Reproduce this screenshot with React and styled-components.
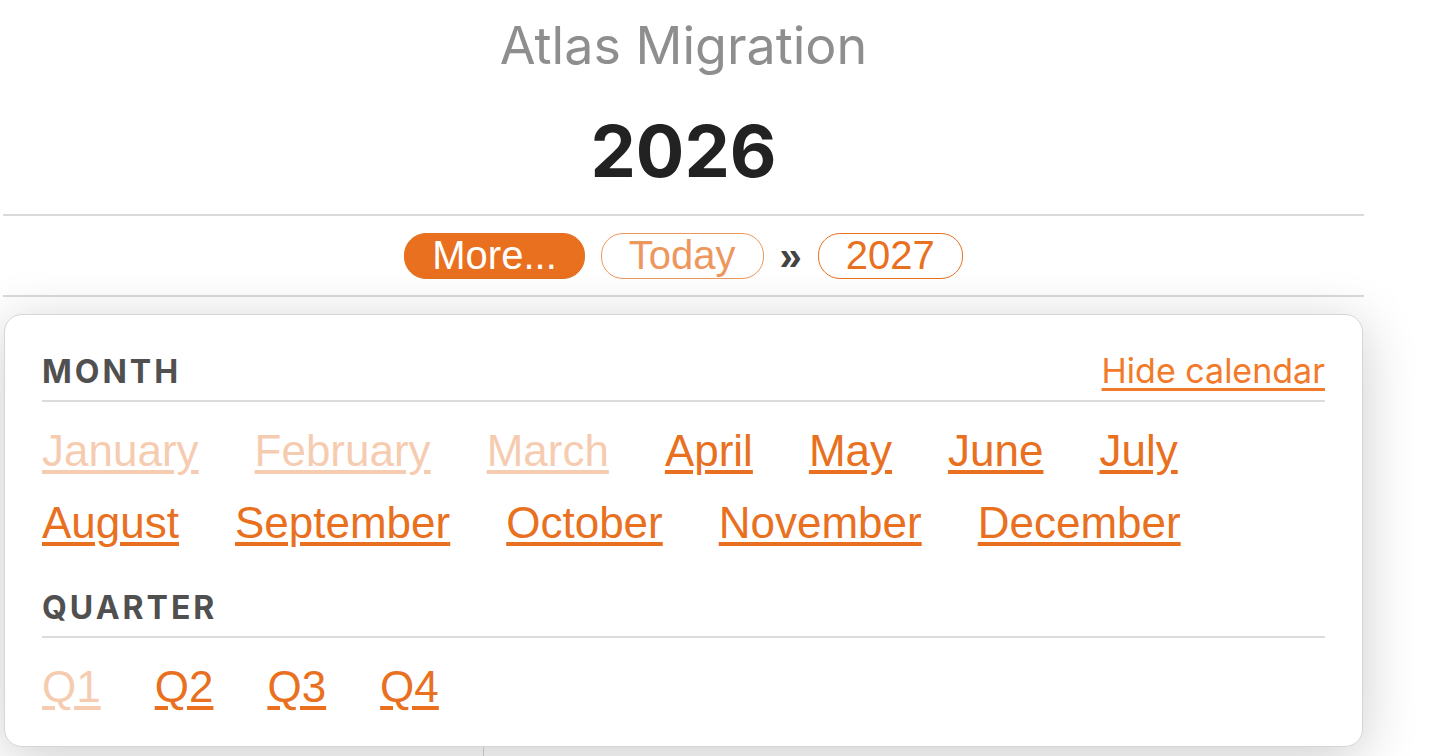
import React from 'react';
import styled, { createGlobalStyle } from 'styled-components';

const ORANGE = '#e8701f';

const GlobalStyle = createGlobalStyle`
  html, body {
    margin: 0;
    padding: 0;
    background: #fff;
  }
  body {
    font-family: "Liberation Sans", Arial, sans-serif;
    overflow: hidden;
  }
`;

const Page = styled.div`
  width: 1361px;
  margin-left: 3px;
`;

const Header = styled.header`
  display: flex;
  flex-direction: column;
  align-items: center;
  padding-top: 16px;
`;

const Title = styled.h1`
  margin: 0;
  font-family: "Inter", "Liberation Sans", sans-serif;
  font-weight: 400;
  font-size: 52px;
  line-height: 60px;
  color: #8e8e8e;
`;

const Year = styled.h2`
  margin: 35px 0 23px;
  font-family: "Inter", "Liberation Sans", sans-serif;
  font-weight: 700;
  font-size: 72px;
  line-height: 80px;
  color: #222;
`;

const NavRow = styled.nav`
  display: flex;
  justify-content: center;
  align-items: center;
  gap: 16px;
  height: 79px;
  border-top: 2px solid #dadada;
  border-bottom: 2px solid #dadada;
`;

const Pill = styled.button`
  height: 46px;
  box-sizing: border-box;
  padding: 0 27px;
  border-radius: 22px;
  border: 1.5px solid ${ORANGE};
  background: ${p => (p.$filled ? ORANGE : '#fff')};
  color: ${p => (p.$filled ? '#fff' : ORANGE)};
  opacity: ${p => (p.$faded ? 0.72 : 1)};
  font-family: "Liberation Sans", Arial, sans-serif;
  font-size: 40px;
  line-height: 43px;
  cursor: pointer;
`;

const Chevrons = styled.span`
  font-size: 40px;
  line-height: 46px;
  color: #444;
  font-weight: 700;
`;

const Main = styled.main`
  position: relative;
  display: grid;
  grid-template-columns: 480px 1fr;
  padding-top: 60px;
  min-height: calc(100vh - 357px);
`;

const Column = styled.section`
  border-left: ${p => (p.$divided ? '1px solid #d6d6d6' : 'none')};
`;

const Popover = styled.div`
  position: absolute;
  top: 17px;
  left: 1px;
  right: 1px;
  box-sizing: border-box;
  padding: 36px 37px 23px;
  background: #fff;
  border: 1px solid #d6d6d6;
  border-radius: 18px;
  box-shadow: 0 10px 56px rgba(0, 0, 0, 0.2);
`;

const SectionHead = styled.div`
  display: flex;
  justify-content: space-between;
  align-items: baseline;
  padding-bottom: 8px;
  border-bottom: 2px solid #dcdcdc;
  margin-top: ${p => p.$offset || 0}px;
`;

const Label = styled.span`
  font-family: "Inter", "Liberation Sans", sans-serif;
  font-weight: 700;
  font-size: 32px;
  line-height: 40px;
  letter-spacing: 3px;
  color: #505050;
`;

const HideLink = styled.a`
  font-family: "Inter", "Liberation Sans", sans-serif;
  font-size: 34px;
  line-height: 40px;
  color: #f27a2a;
  text-decoration: underline;
  text-decoration-thickness: 3px;
  text-underline-offset: 5px;
  cursor: pointer;
`;

const LinkList = styled.div`
  display: flex;
  flex-wrap: wrap;
  column-gap: ${p => p.$gap || 56}px;
  padding-top: 13px;
`;

const PeriodLink = styled.a`
  font-family: "Liberation Sans", Arial, sans-serif;
  font-size: 44px;
  line-height: 72px;
  color: ${ORANGE};
  opacity: ${p => (p.$past ? 0.35 : 1)};
  text-decoration: underline;
  text-decoration-thickness: 4px;
  text-underline-offset: 4px;
  cursor: pointer;
`;

const months = [
  'January', 'February', 'March', 'April', 'May', 'June',
  'July', 'August', 'September', 'October', 'November', 'December',
];
const quarters = ['Q1', 'Q2', 'Q3', 'Q4'];

export default function App() {
  return (
    <Page>
      <GlobalStyle />
      <Header>
        <Title>Atlas Migration</Title>
        <Year>2026</Year>
      </Header>
      <NavRow>
        <Pill $filled>More...</Pill>
        <Pill $faded>Today</Pill>
        <Chevrons>»</Chevrons>
        <Pill>2027</Pill>
      </NavRow>
      <Main>
        <Column />
        <Column $divided />
        <Popover>
          <SectionHead>
            <Label>MONTH</Label>
            <HideLink>Hide calendar</HideLink>
          </SectionHead>
          <LinkList>
            {months.map((m, i) => (
              <PeriodLink key={m} $past={i < 3}>{m}</PeriodLink>
            ))}
          </LinkList>
          <SectionHead $offset={29}>
            <Label>QUARTER</Label>
          </SectionHead>
          <LinkList $gap={54}>
            {quarters.map((q, i) => (
              <PeriodLink key={q} $past={i === 0}>{q}</PeriodLink>
            ))}
          </LinkList>
        </Popover>
      </Main>
    </Page>
  );
}
